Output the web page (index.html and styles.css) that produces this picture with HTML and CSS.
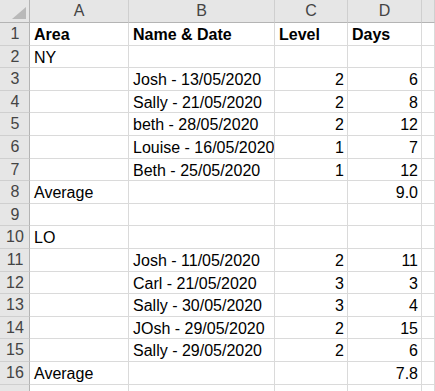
FILE: index.html
```html
<!DOCTYPE html>
<html>
<head>
<meta charset="utf-8">
<link rel="stylesheet" href="styles.css">
</head>
<body>
<div class="sheet">
  <div class="hd corner"><span class="tri"></span></div>
  <div class="hd col">A</div><div class="hd col">B</div><div class="hd col">C</div><div class="hd col">D</div><div class="hd col"></div>

  <div class="hd rn">1</div><div class="c b">Area</div><div class="c b">Name &amp; Date</div><div class="c b">Level</div><div class="c b">Days</div><div class="c"></div>
  <div class="hd rn">2</div><div class="c">NY</div><div class="c"></div><div class="c"></div><div class="c"></div><div class="c"></div>
  <div class="hd rn">3</div><div class="c"></div><div class="c">Josh - 13/05/2020</div><div class="c n">2</div><div class="c n">6</div><div class="c"></div>
  <div class="hd rn">4</div><div class="c"></div><div class="c">Sally - 21/05/2020</div><div class="c n">2</div><div class="c n">8</div><div class="c"></div>
  <div class="hd rn">5</div><div class="c"></div><div class="c">beth - 28/05/2020</div><div class="c n">2</div><div class="c n">12</div><div class="c"></div>
  <div class="hd rn">6</div><div class="c"></div><div class="c">Louise - 16/05/2020</div><div class="c n">1</div><div class="c n">7</div><div class="c"></div>
  <div class="hd rn">7</div><div class="c"></div><div class="c">Beth - 25/05/2020</div><div class="c n">1</div><div class="c n">12</div><div class="c"></div>
  <div class="hd rn">8</div><div class="c">Average</div><div class="c"></div><div class="c"></div><div class="c n">9.0</div><div class="c"></div>
  <div class="hd rn">9</div><div class="c"></div><div class="c"></div><div class="c"></div><div class="c"></div><div class="c"></div>
  <div class="hd rn">10</div><div class="c">LO</div><div class="c"></div><div class="c"></div><div class="c"></div><div class="c"></div>
  <div class="hd rn">11</div><div class="c"></div><div class="c">Josh - 11/05/2020</div><div class="c n">2</div><div class="c n">11</div><div class="c"></div>
  <div class="hd rn">12</div><div class="c"></div><div class="c">Carl - 21/05/2020</div><div class="c n">3</div><div class="c n">3</div><div class="c"></div>
  <div class="hd rn">13</div><div class="c"></div><div class="c">Sally - 30/05/2020</div><div class="c n">3</div><div class="c n">4</div><div class="c"></div>
  <div class="hd rn">14</div><div class="c"></div><div class="c">JOsh - 29/05/2020</div><div class="c n">2</div><div class="c n">15</div><div class="c"></div>
  <div class="hd rn">15</div><div class="c"></div><div class="c">Sally - 29/05/2020</div><div class="c n">2</div><div class="c n">6</div><div class="c"></div>
  <div class="hd rn">16</div><div class="c">Average</div><div class="c"></div><div class="c"></div><div class="c n">7.8</div><div class="c"></div>
  <div class="hd rn"></div><div class="c"></div><div class="c"></div><div class="c"></div><div class="c"></div><div class="c"></div>
</div>
</body>
</html>
```
FILE: styles.css
```css
html, body {
  margin: 0;
  padding: 0;
  background: #ffffff;
  overflow: hidden;
}
.sheet {
  display: grid;
  grid-template-columns: 30px 99px 146px 73px 74px 1fr;
  grid-template-rows: 23px;
  grid-auto-rows: 22.6px;
  font-family: "Liberation Sans", Arial, sans-serif;
  font-size: 16px;
  width: 435px;
  height: 391px;
  overflow: hidden;
}
.hd {
  background: #e6e6e6;
  color: #444444;
  box-sizing: border-box;
  border-right: 1px solid #cfcfcf;
  border-bottom: 1px solid #cfcfcf;
  line-height: 22px;
  text-align: center;
  white-space: nowrap;
  overflow: hidden;
}
.col {
  border-bottom: 1px solid #b4b4b4;
}
.rn {
  border-right: 1px solid #b4b4b4;
  line-height: 21.6px;
  padding-left: 1px;
}
.corner {
  display: flex;
  justify-content: flex-end;
  align-items: flex-end;
  padding: 0 3px 3px 0;
  border-bottom: 1px solid #b4b4b4;
  border-right: 1px solid #b4b4b4;
}
.tri {
  width: 14px;
  height: 12px;
  background: #b9b9b9;
  clip-path: polygon(100% 0, 100% 100%, 0 100%);
}
.c {
  box-sizing: border-box;
  border-right: 1px solid #dadada;
  border-bottom: 1px solid #dadada;
  color: #000000;
  line-height: 22px;
  padding: 1px 3px 0 4px;
  white-space: nowrap;
  overflow: hidden;
}
.b {
  font-weight: bold;
}
.n {
  text-align: right;
}
```
